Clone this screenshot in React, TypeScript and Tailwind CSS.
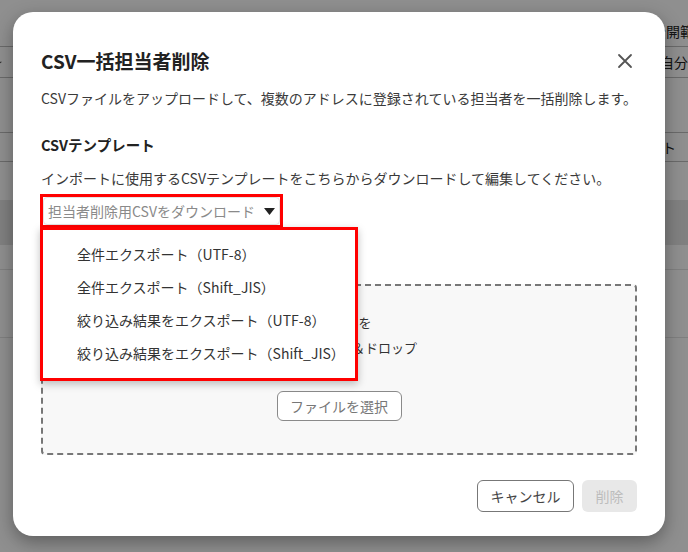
import { useState } from 'react';

const menuItems = [
  '全件エクスポート（UTF-8）',
  '全件エクスポート（Shift_JIS）',
  '絞り込み結果をエクスポート（UTF-8）',
  '絞り込み結果をエクスポート（Shift_JIS）',
];

function CloseIcon() {
  return (
    <svg width="16" height="16" viewBox="0 0 16 16" fill="none">
      <path d="M2 2L14 14M14 2L2 14" stroke="#555" strokeWidth="1.8" strokeLinecap="round" />
    </svg>
  );
}

function Caret() {
  return (
    <svg width="11" height="7" viewBox="0 0 11 7">
      <path d="M0 0H11L5.5 7Z" fill="#222" />
    </svg>
  );
}

// page behind the overlay
function BackgroundPage() {
  return (
    <div className="h-[552px] w-full overflow-hidden whitespace-nowrap bg-white text-[14px] text-[#222]">
      <div className="flex h-[47px] items-end border-b border-[#bdbdbd] pb-[4px] pl-[652px]">公開範囲</div>
      <div className="flex h-[31px] items-center border-b border-[#bdbdbd]">
        <svg width="6" height="5" viewBox="0 0 6 5" className="mr-[658px]">
          <path d="M-4 0H6L1 5Z" fill="#555" />
        </svg>
        <span>自分</span>
      </div>
      <div className="h-[55px] border-b border-[#bdbdbd]" />
      <div className="flex h-[29px] items-center border-b border-[#bdbdbd] pl-[606px]">インポート</div>
      <div className="h-[38px]" />
      <div className="h-[45px] bg-[#e4e4e4]" />
      <div className="h-[25px] border-b border-[#e2e2e2]" />
      <div className="h-[68px] border-b border-[#e2e2e2]" />
    </div>
  );
}

export default function App() {
  const [open] = useState(true);

  return (
    <div className="relative h-[552px] w-[688px] overflow-hidden" style={{ fontFamily: '"Noto Sans CJK JP", "Noto Sans", sans-serif' }}>
      <BackgroundPage />

      {/* overlay */}
      <div className="absolute inset-0 bg-black/[0.44]" />

      {/* dialog */}
      <div className="absolute left-[13px] top-[12px] flex h-[524px] w-[652px] flex-col rounded-[20px] bg-white px-[28px] pt-[35px] shadow-[0_6px_18px_rgba(0,0,0,0.35)]">
        <div className="flex items-center justify-between">
          <h2 className="text-[19px] font-bold leading-[28px] text-[#222]">CSV一括担当者削除</h2>
          <button type="button" className="mr-[2px] flex h-[20px] w-[20px] items-center justify-center">
            <CloseIcon />
          </button>
        </div>

        <p className="mt-[12px] text-[14px] leading-[22px] text-[#3a3a3a]">
          CSVファイルをアップロードして、複数のアドレスに登録されている担当者を一括削除します。
        </p>

        <h3 className="mt-[25px] text-[14.5px] font-bold leading-[22px] text-[#222]">CSVテンプレート</h3>
        <p className="mt-[11px] text-[14px] leading-[22px] text-[#3a3a3a]">
          インポートに使用するCSVテンプレートをこちらからダウンロードして編集してください。
        </p>

        <div className="relative mt-[5px]">
          <div className="-ml-[1px] flex h-[34px] w-[243px] border-[3px] border-[#ff0000]">
            <div className="flex flex-1 items-center gap-[9px] rounded-[4px] border border-[#e4e4e4] pl-[4px]">
              <span className="text-[14px] text-[#8a8a8a]">担当者削除用CSVをダウンロード</span>
              <Caret />
            </div>
          </div>

          {open && (
            <div className="absolute left-[-1px] top-[33px] z-10 w-[318px] border-[3px] border-[#ff0000] bg-white py-[8px] pl-[34px] shadow-[0_3px_8px_rgba(0,0,0,0.25)]">
              {menuItems.map((item) => (
                <div key={item} className="flex h-[33px] items-center text-[14px] text-[#333]">
                  {item}
                </div>
              ))}
            </div>
          )}
        </div>

        {/* drop zone */}
        <div className="mt-[56px] flex h-[171px] flex-col items-center rounded-[4px] border-2 border-dashed border-[#777] bg-[#f8f8f8] pt-[24px]">
          <p className="text-center text-[13px] leading-[25px] text-[#333]">
            ファイルを
            <br />
            ここにドラッグ＆ドロップ
          </p>
          <button
            type="button"
            className="mt-[31px] flex h-[30px] w-[125px] items-center justify-center rounded-[6px] border border-[#8a8a8a] bg-white text-[14px] text-[#777]"
          >
            ファイルを選択
          </button>
        </div>

        <div className="mt-[25px] flex justify-end gap-[8px]">
          <button
            type="button"
            className="flex h-[32px] w-[97px] items-center justify-center rounded-[6px] border border-[#777] bg-white text-[14px] text-[#444]"
          >
            キャンセル
          </button>
          <button
            type="button"
            className="flex h-[32px] w-[55px] items-center justify-center rounded-[6px] bg-[#e8e8e8] text-[14px] text-[#bdbdbd]"
          >
            削除
          </button>
        </div>
      </div>
    </div>
  );
}
